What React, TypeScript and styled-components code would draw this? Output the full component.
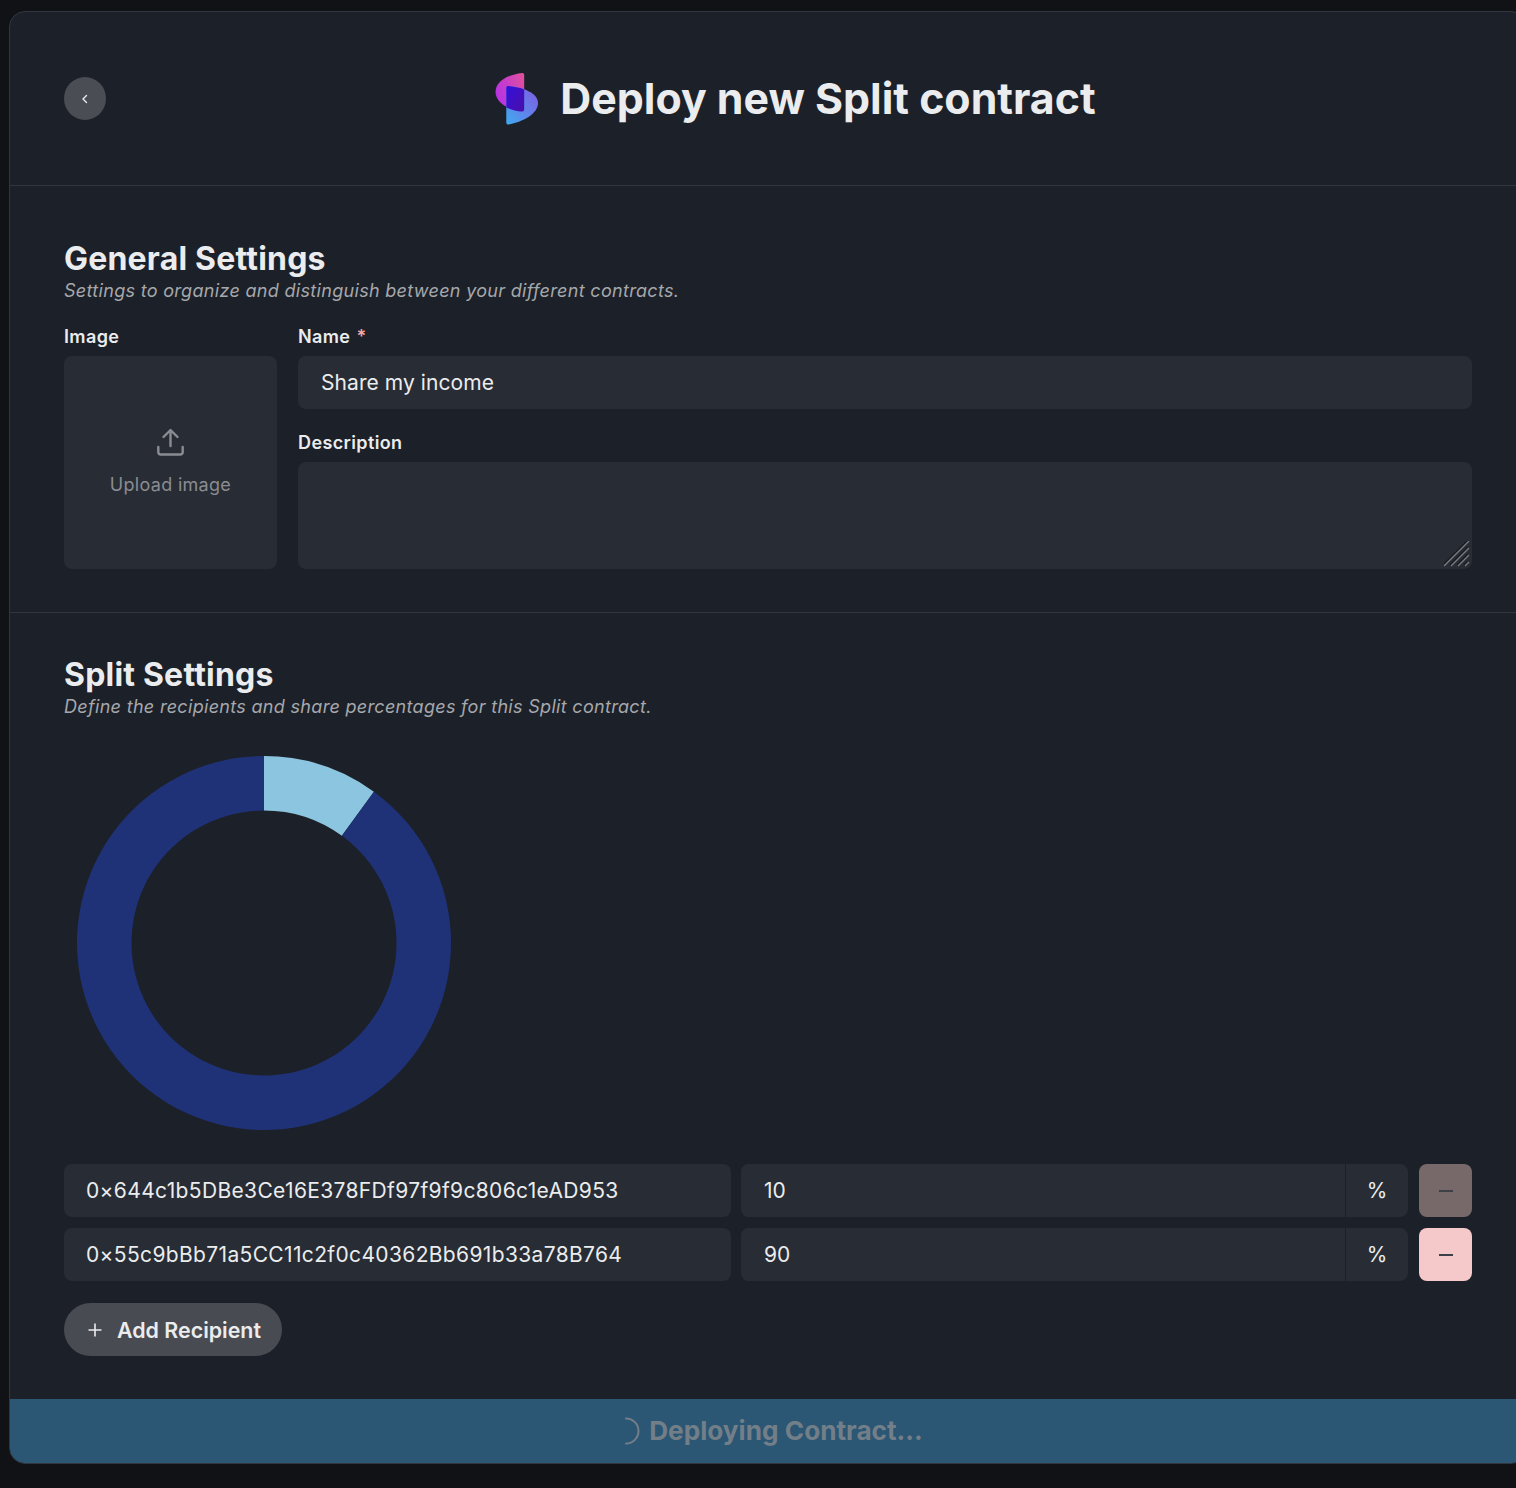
import React from 'react';
import styled, { createGlobalStyle } from 'styled-components';

const GlobalStyle = createGlobalStyle`
    html, body {
        margin: 0;
        height: 1488px;
        overflow: hidden;
        background: #101216;
        font-family: Inter, "Liberation Sans", sans-serif;
    }
`;

const Page = styled.div`
    width: 1516px;
    height: 1488px;
    overflow: hidden;
    padding: 11px 0 0 9px;
    box-sizing: border-box;
`;

const Card = styled.div`
    width: 1518px;
    height: 1453px;
    box-sizing: border-box;
    background: #1c2028;
    border: 1px solid #32363e;
    border-radius: 16px;
    overflow: hidden;
    display: flex;
    flex-direction: column;
`;

const Header = styled.div`
    height: 174px;
    flex: none;
    box-sizing: border-box;
    padding: 0 54px;
    display: flex;
    align-items: center;
    gap: 12px;
    border-bottom: 1px solid #32363e;
`;

const BackButton = styled.button`
    width: 42px;
    height: 43px;
    flex: none;
    border: 0;
    padding: 0;
    border-radius: 50%;
    background: #4a4d54;
    display: flex;
    align-items: center;
    justify-content: center;
`;

const TitleGroup = styled.div`
    flex: 1;
    display: flex;
    align-items: center;
    justify-content: center;
    gap: 22px;
`;

const Title = styled.h1`
    margin: 0 0 2px;
    font-size: 42.85px;
    line-height: 52px;
    font-weight: 700;
    color: #ebecee;
`;

const Section = styled.section<{ $top: number; $bottom: number; $divided?: boolean }>`
    flex: none;
    padding: ${(p) => p.$top}px 54px ${(p) => p.$bottom}px;
    border-bottom: ${(p) => (p.$divided ? '1px solid #32363e' : '0')};
`;

const SectionTitle = styled.h2`
    margin: 0 0 1px;
    font-size: 32px;
    line-height: 39px;
    font-weight: 700;
    letter-spacing: 0.2px;
    color: #ebecee;
`;

const SectionHint = styled.p`
    margin: 0;
    font-size: 18px;
    line-height: 24px;
    font-style: italic;
    letter-spacing: 0.31px;
    color: #a6a8ac;
`;

const SettingsGrid = styled.div`
    margin-top: 22px;
    display: grid;
    grid-template-columns: 213px 1fr;
    column-gap: 21px;
`;

const Column = styled.div`
    display: flex;
    flex-direction: column;
`;

const Label = styled.label<{ $gap?: number }>`
    display: block;
    margin-top: ${(p) => p.$gap || 0}px;
    margin-bottom: 7px;
    font-size: 18px;
    line-height: 24px;
    font-weight: 600;
    letter-spacing: 0.38px;
    color: #ebecee;
`;

const Required = styled.span`
    margin-left: 6px;
    color: #f3a7a7;
`;

const UploadBox = styled.div`
    height: 213px;
    border-radius: 8px;
    background: #282c35;
    display: flex;
    flex-direction: column;
    align-items: center;
    justify-content: center;
    gap: 17px;
    color: #8a8c91;
    font-size: 18px;
    line-height: 24px;
    letter-spacing: 0.3px;
`;

const TextInput = styled.input`
    width: 100%;
    height: 53px;
    box-sizing: border-box;
    border: 0;
    outline: 0;
    border-radius: 8px;
    padding: 0 23px;
    background: #282c35;
    color: #ebecee;
    font-family: inherit;
    font-size: 21px;
    letter-spacing: 0.07px;
`;

const AddressInput = styled(TextInput)`
    padding-left: 22px;
    letter-spacing: 0.35px;
`;

const TextAreaWrap = styled.div`
    position: relative;
    height: 107px;
`;

const TextArea = styled.textarea`
    display: block;
    width: 100%;
    height: 107px;
    box-sizing: border-box;
    border: 0;
    outline: 0;
    border-radius: 8px;
    padding: 12px 23px;
    background: #282c35;
    color: #ebecee;
    font-family: inherit;
    font-size: 21px;
    resize: none;
`;

const ResizeGrip = styled.svg`
    position: absolute;
    right: 2px;
    bottom: 2px;
`;

const ChartBox = styled.div`
    margin-top: 36px;
    margin-left: 12px;
    width: 376px;
    height: 376px;
`;

const Rows = styled.div`
    margin-top: 33px;
    display: flex;
    flex-direction: column;
    gap: 11px;
`;

const Row = styled.div`
    display: grid;
    grid-template-columns: 667px 667px 1fr;
    column-gap: 10px;
`;

const PercentGroup = styled.div`
    height: 53px;
    display: flex;
    border-radius: 8px;
    overflow: hidden;
    background: #282c35;
`;

const PercentInput = styled(TextInput)`
    flex: 1;
    width: auto;
    min-width: 0;
    border-radius: 0;
`;

const PercentSuffix = styled.div`
    width: 62px;
    flex: none;
    border-left: 1px solid #1c2028;
    display: flex;
    align-items: center;
    justify-content: center;
    font-size: 21px;
    color: #ebecee;
`;

const RemoveButton = styled.button<{ $muted?: boolean }>`
    width: 53px;
    height: 53px;
    justify-self: end;
    border: 0;
    padding: 0;
    border-radius: 8px;
    background: ${(p) => (p.$muted ? '#77696a' : '#f5c9c9')};
    display: flex;
    align-items: center;
    justify-content: center;
`;

const AddButton = styled.button`
    margin-top: 22px;
    width: 218px;
    height: 53px;
    border: 0;
    padding: 0 0 0 2px;
    border-radius: 27px;
    background: #494b52;
    color: #ebecee;
    font-family: inherit;
    font-size: 21.4px;
    font-weight: 600;
    display: flex;
    align-items: center;
    justify-content: center;
    gap: 14px;
`;

const DeployBar = styled.button`
    flex: none;
    height: 64px;
    border: 0;
    padding: 0;
    margin-top: auto;
    background: #2b5674;
    color: #737f88;
    font-family: inherit;
    font-size: 26.2px;
    font-weight: 700;
    display: flex;
    align-items: center;
    justify-content: center;
    gap: 8px;
`;

const DeployLabel = styled.span`
    margin-bottom: 2px;
`;

const Logo = () => (
    <svg width="44" height="53" viewBox="0 0 43 53" preserveAspectRatio="none">
        <defs>
            <linearGradient id="logoTop" x1="0" y1="0.6" x2="1" y2="0.1">
                <stop offset="0" stopColor="#b632e6" />
                <stop offset="1" stopColor="#e0509c" />
            </linearGradient>
            <linearGradient id="logoBottom" x1="0.1" y1="1" x2="0.9" y2="0.2">
                <stop offset="0" stopColor="#43a6ee" />
                <stop offset="1" stopColor="#7a64e6" />
            </linearGradient>
            <linearGradient id="logoMid" x1="0" y1="0" x2="1" y2="1">
                <stop offset="0" stopColor="#3410dc" />
                <stop offset="1" stopColor="#4a0fa8" />
            </linearGradient>
        </defs>
        <path d="M27.500 1C12 3 1.500 10 1.500 20C1.500 30 14 38.500 27 39.500C28.500 39.500 29.500 39 29.500 37.500V3C29.500 1.500 28.500 1 27.500 1Z" fill="url(#logoTop)" />
        <path d="M14 14C28 15 43 21 43 31C43 42 28 50 14 52.500C12.800 52.500 12 52 12 50.500V16C12 14.500 12.800 14 14 14Z" fill="url(#logoBottom)" />
        <path d="M14 14C19 14.400 25 15.500 29.500 17.400V37.500C29.500 39 28.500 39.500 27 39.500C22 39 16.500 37.500 12 35.400V16C12 14.500 12.800 14 14 14Z" fill="url(#logoMid)" />
    </svg>
);

const UploadIcon = () => (
    <svg width="27" height="28" viewBox="0 0 27 28" fill="none" stroke="#8a8c91" strokeWidth="2.400" strokeLinecap="round" strokeLinejoin="round">
        <path d="M13.500 18V2.500M6.500 9L13.500 2L20.500 9" />
        <path d="M1.300 19V24C1.300 25.500 2.300 26.500 3.800 26.500H23.200C24.700 26.500 25.700 25.500 25.700 24V19" />
    </svg>
);

const MinusIcon = () => (
    <svg width="14" height="2" viewBox="0 0 14 2">
        <rect width="14" height="2" fill="#3e4048" />
    </svg>
);

// donut slice from fraction a to fraction b, clockwise from the top
const slicePath = (a: number, b: number) => {
    const c = 188;
    const R = 187;
    const r = 132.5;
    const pt = (rad: number, f: number) => {
        const t = f * 2 * Math.PI;
        return `${(c + rad * Math.sin(t)).toFixed(2)} ${(c - rad * Math.cos(t)).toFixed(2)}`;
    };
    const large = b - a > 0.5 ? 1 : 0;
    return `M${pt(R, a)}A${R} ${R} 0 ${large} 1 ${pt(R, b)}L${pt(r, b)}A${r} ${r} 0 ${large} 0 ${pt(r, a)}Z`;
};

const recipients = [
    { address: '0×644c1b5DBe3Ce16E378FDf97f9f9c806c1eAD953', share: '10', muted: true },
    { address: '0×55c9bBb71a5CC11c2f0c40362Bb691b33a78B764', share: '90', muted: false },
];

const App = () => {
    return (
        <Page>
            <GlobalStyle />
            <Card>
                <Header>
                    <BackButton>
                        <svg width="12" height="12" viewBox="0 0 12 12" fill="none" stroke="#ebecee" strokeWidth="1.400" strokeLinecap="round" strokeLinejoin="round">
                            <path d="M7.500 2.500L4 6L7.500 9.500" />
                        </svg>
                    </BackButton>
                    <TitleGroup>
                        <Logo />
                        <Title>Deploy new Split contract</Title>
                    </TitleGroup>
                </Header>

                <Section $top={53} $bottom={43} $divided>
                    <SectionTitle>General Settings</SectionTitle>
                    <SectionHint>Settings to organize and distinguish between your different contracts.</SectionHint>
                    <SettingsGrid>
                        <Column>
                            <Label>Image</Label>
                            <UploadBox>
                                <UploadIcon />
                                Upload image
                            </UploadBox>
                        </Column>
                        <Column>
                            <Label>Name<Required>*</Required></Label>
                            <TextInput value="Share my income" readOnly />
                            <Label $gap={22}>Description</Label>
                            <TextAreaWrap>
                                <TextArea readOnly />
                                <ResizeGrip width="26" height="26" viewBox="0 0 26 26" fill="none" strokeWidth="1.300">
                                    <path d="M0 25L25 0M7 25L25 7M14 25L25 14M21 25L25 21" stroke="#181a20" transform="translate(-1 -1)" />
                                    <path d="M0 25L25 0M7 25L25 7M14 25L25 14M21 25L25 21" stroke="#7c7d80" />
                                </ResizeGrip>
                            </TextAreaWrap>
                        </Column>
                    </SettingsGrid>
                </Section>

                <Section $top={42} $bottom={0}>
                    <SectionTitle>Split Settings</SectionTitle>
                    <SectionHint>Define the recipients and share percentages for this Split contract.</SectionHint>
                    <ChartBox>
                        <svg width="376" height="376" viewBox="0 0 376 376">
                            <path d={slicePath(0, 0.1)} fill="#8cc5df" />
                            <path d={slicePath(0.1, 1)} fill="#1f3277" />
                        </svg>
                    </ChartBox>
                    <Rows>
                        {recipients.map((r) => (
                            <Row key={r.address}>
                                <AddressInput value={r.address} readOnly />
                                <PercentGroup>
                                    <PercentInput value={r.share} readOnly />
                                    <PercentSuffix>%</PercentSuffix>
                                </PercentGroup>
                                <RemoveButton $muted={r.muted}><MinusIcon /></RemoveButton>
                            </Row>
                        ))}
                    </Rows>
                    <AddButton>
                        <svg width="16" height="16" viewBox="0 0 16 16" fill="none" stroke="#ebecee" strokeWidth="1.600">
                            <path d="M8 1.500V14.500M1.500 8H14.500" />
                        </svg>
                        Add Recipient
                    </AddButton>
                </Section>

                <DeployBar>
                    <svg width="28" height="28" viewBox="0 0 28 28" fill="none" stroke="#737f88" strokeWidth="2" strokeLinecap="round">
                        <path d="M13 1.500A12.500 12.500 0 0 1 13 26.500" />
                    </svg>
                    <DeployLabel>Deploying Contract...</DeployLabel>
                </DeployBar>
            </Card>
        </Page>
    );
};

export default App;
